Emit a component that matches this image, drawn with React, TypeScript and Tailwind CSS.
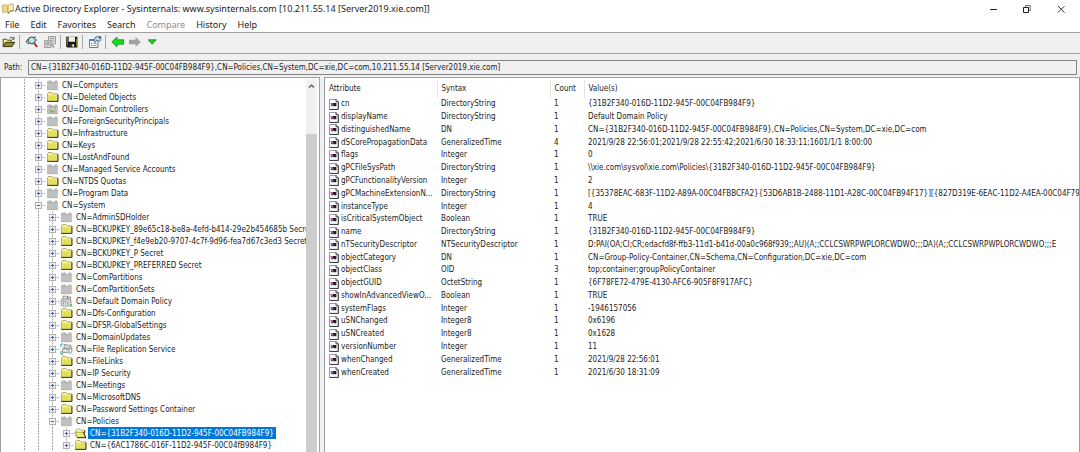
import React, { useState } from "react";

type IconKind = "folder" | "container" | "ou" | "policy" | "replication" | "open";

type Node = { name: string; level: 1 | 2 | 3; icon: IconKind; expanded?: boolean };

const NODES: Node[] = [
  { name: "CN=Computers", level: 1, icon: "container" },
  { name: "CN=Deleted Objects", level: 1, icon: "folder" },
  { name: "OU=Domain Controllers", level: 1, icon: "ou" },
  { name: "CN=ForeignSecurityPrincipals", level: 1, icon: "container" },
  { name: "CN=Infrastructure", level: 1, icon: "folder" },
  { name: "CN=Keys", level: 1, icon: "folder" },
  { name: "CN=LostAndFound", level: 1, icon: "folder" },
  { name: "CN=Managed Service Accounts", level: 1, icon: "container" },
  { name: "CN=NTDS Quotas", level: 1, icon: "folder" },
  { name: "CN=Program Data", level: 1, icon: "container" },
  { name: "CN=System", level: 1, icon: "container", expanded: true },
  { name: "CN=AdminSDHolder", level: 2, icon: "container" },
  { name: "CN=BCKUPKEY_89e65c18-be8a-4efd-b414-29e2b454685b Secret", level: 2, icon: "folder" },
  { name: "CN=BCKUPKEY_f4e9eb20-9707-4c7f-9d96-fea7d67c3ed3 Secret", level: 2, icon: "folder" },
  { name: "CN=BCKUPKEY_P Secret", level: 2, icon: "folder" },
  { name: "CN=BCKUPKEY_PREFERRED Secret", level: 2, icon: "folder" },
  { name: "CN=ComPartitions", level: 2, icon: "container" },
  { name: "CN=ComPartitionSets", level: 2, icon: "container" },
  { name: "CN=Default Domain Policy", level: 2, icon: "policy" },
  { name: "CN=Dfs-Configuration", level: 2, icon: "folder" },
  { name: "CN=DFSR-GlobalSettings", level: 2, icon: "folder" },
  { name: "CN=DomainUpdates", level: 2, icon: "container" },
  { name: "CN=File Replication Service", level: 2, icon: "replication" },
  { name: "CN=FileLinks", level: 2, icon: "folder" },
  { name: "CN=IP Security", level: 2, icon: "folder" },
  { name: "CN=Meetings", level: 2, icon: "container" },
  { name: "CN=MicrosoftDNS", level: 2, icon: "folder" },
  { name: "CN=Password Settings Container", level: 2, icon: "folder" },
  { name: "CN=Policies", level: 2, icon: "container", expanded: true },
  { name: "CN={31B2F340-016D-11D2-945F-00C04FB984F9}", level: 3, icon: "open" },
  { name: "CN={6AC1786C-016F-11D2-945F-00C04fB984F9}", level: 3, icon: "folder" },
];

const ATTRIBUTES: [string, string, string, string][] = [
  ["cn", "DirectoryString", "1", "{31B2F340-016D-11D2-945F-00C04FB984F9}"],
  ["displayName", "DirectoryString", "1", "Default Domain Policy"],
  ["distinguishedName", "DN", "1", "CN={31B2F340-016D-11D2-945F-00C04FB984F9},CN=Policies,CN=System,DC=xie,DC=com"],
  ["dSCorePropagationData", "GeneralizedTime", "4", "2021/9/28 22:56:01;2021/9/28 22:55:42;2021/6/30 18:33:11;1601/1/1 8:00:00"],
  ["flags", "Integer", "1", "0"],
  ["gPCFileSysPath", "DirectoryString", "1", "\\\\xie.com\\sysvol\\xie.com\\Policies\\{31B2F340-016D-11D2-945F-00C04FB984F9}"],
  ["gPCFunctionalityVersion", "Integer", "1", "2"],
  ["gPCMachineExtensionN...", "DirectoryString", "1", "[{35378EAC-683F-11D2-A89A-00C04FBBCFA2}{53D6AB1B-2488-11D1-A28C-00C04FB94F17}][{827D319E-6EAC-11D2-A4EA-00C04F79"],
  ["instanceType", "Integer", "1", "4"],
  ["isCriticalSystemObject", "Boolean", "1", "TRUE"],
  ["name", "DirectoryString", "1", "{31B2F340-016D-11D2-945F-00C04FB984F9}"],
  ["nTSecurityDescriptor", "NTSecurityDescriptor", "1", "D:PAI(OA;CI;CR;edacfd8f-ffb3-11d1-b41d-00a0c968f939;;AU)(A;;CCLCSWRPWPLORCWDWO;;;DA)(A;;CCLCSWRPWPLORCWDWO;;;E"],
  ["objectCategory", "DN", "1", "CN=Group-Policy-Container,CN=Schema,CN=Configuration,DC=xie,DC=com"],
  ["objectClass", "OID", "3", "top;container;groupPolicyContainer"],
  ["objectGUID", "OctetString", "1", "{6F78FE72-479E-4130-AFC6-905F8F917AFC}"],
  ["showInAdvancedViewO...", "Boolean", "1", "TRUE"],
  ["systemFlags", "Integer", "1", "-1946157056"],
  ["uSNChanged", "Integer8", "1", "0x6196"],
  ["uSNCreated", "Integer8", "1", "0x1628"],
  ["versionNumber", "Integer", "1", "11"],
  ["whenChanged", "GeneralizedTime", "1", "2021/9/28 22:56:01"],
  ["whenCreated", "GeneralizedTime", "1", "2021/6/30 18:31:09"],
];

const MENUS = ["File", "Edit", "Favorites", "Search", "Compare", "History", "Help"];

function NodeIcon({ kind }: { kind: IconKind }) {
  return (
    <svg className="h-3 w-[13px] shrink-0" viewBox="0 0 13 12" aria-hidden="true">
      {kind === "folder" && (
        <>
          <path d="M1.5 10V3L2.5 1.5H6L7 2.8H11.5V10Z" fill="#f4f0a8" stroke="#a9a03c" strokeWidth=".8" />
          <path d="M2.2 4.3H10.8V9.6H2.2Z" fill="#e3df55" />
          <path d="M1.2 10.4H12V3.4" fill="none" stroke="#34342a" strokeWidth="1" />
        </>
      )}
      {(kind === "container" || kind === "ou") && (
        <>
          <path d="M1 11V3L1.6 1.6H5.4L6.4 3H9L9.6 1.2H11.4V11Z" fill="#c0c0c0" />
          <path d="M1 3.4H11.4M5 1.6V3M8.6 1.4V3" stroke="#a2a2a2" strokeWidth=".6" />
          <path d="M1 10.7H11.7V3" fill="none" stroke="#a8a8a8" strokeWidth=".6" />
        </>
      )}
      {kind === "ou" && (
        <>
          <path d="M4.4 4H9V9H4.4Z" fill="#cfcfc6" stroke="#96968c" strokeWidth=".6" />
          <path d="M4.6 7.2H7.4V9.2H4.6Z" fill="#a89f4c" />
        </>
      )}
      {kind === "policy" && (
        <>
          <path d="M3 4V1.2H7.4V4M7.8 4.5V2H10.5V6" fill="#e8e8e8" stroke="#777" strokeWidth=".8" />
          <path d="M1 4.5L6 3.6L11 5V10.8L6 11.5L1 10.6Z" fill="#d6d6d6" stroke="#777" strokeWidth=".8" strokeDasharray="1.6 .7" />
          <path d="M3.4 5.5V9.8M5.6 5V8M7.8 6.6V10" stroke="#a0a0a0" strokeWidth=".9" />
          <path d="M10 9H12V11.4H10Z" fill="#6cbf6a" />
        </>
      )}
      {kind === "replication" && (
        <>
          <path d="M4 5.4V1.4H7L7.8 2.2H11V5.4Z" fill="#d0d0d0" stroke="#777" strokeWidth=".7" />
          <path d="M2.6 9.6V5.6H5.4L6.2 6.4H9.2V9.6Z" fill="#dcdcdc" stroke="#777" strokeWidth=".7" />
          <path d="M2.8 1H.9V4.2M1 7.8V11.2H3.4" fill="none" stroke="#2f9c9c" strokeWidth="1" />
          <path d="M11.8 4.6V8.4L10 11" fill="none" stroke="#2f9c9c" strokeWidth="1" />
        </>
      )}
      {kind === "open" && (
        <>
          <path d="M2 9.5V3L3 2H6L7 3.2H10.5V9.5Z" fill="#fbf8c8" stroke="#a9a03c" strokeWidth=".8" />
          <path d="M.8 5.2H9L11.4 10.4H3Z" fill="#ece87a" stroke="#8f872c" strokeWidth=".7" />
          <path d="M3 10.7H12L9.4 5.4M10.8 3.4V6" fill="none" stroke="#222" strokeWidth=".9" />
        </>
      )}
    </svg>
  );
}

function Guide() {
  return (
    <svg className="h-3 w-3.5 shrink-0" viewBox="0 0 14 12" aria-hidden="true">
      <path d="M6.5 0V12" stroke="#a6a6a6" strokeDasharray="2 1" />
    </svg>
  );
}

function Expander({ expanded, name }: { expanded?: boolean; name: string }) {
  return (
    <button type="button" aria-label={(expanded ? "Collapse " : "Expand ") + name} className="h-3 w-3.5 shrink-0">
      <svg className="block h-3 w-3.5" viewBox="0 0 14 12" aria-hidden="true">
        <path d="M6.5 0V12M7 6.5H14" stroke="#b0b0b0" strokeDasharray="1.5 .8" />
        <rect x="3.5" y="3.5" width="6" height="6" fill="#f4f4f4" stroke="#b2b2b2" />
        <path d={expanded ? "M4.8 6.5H8.2" : "M4.8 6.5H8.2M6.5 4.8V8.2"} stroke="#4c62a0" strokeWidth="1" />
      </svg>
    </button>
  );
}

function AttributeIcon() {
  return (
    <svg className="h-[11px] w-2.5 shrink-0" viewBox="0 0 10 11" aria-hidden="true">
      <path d="M.5 .5H7.2L9.3 2.6V10.5H.5Z" fill="#fff" stroke="#9a9a9a" />
      <path d="M7 .5V2.8H9.3V10.4H.6" fill="none" stroke="#2c2c2c" strokeWidth=".9" />
      <path d="M1.4 4H4V5.4H1.4Z" fill="#d9566a" />
      <path d="M2 5.4H4.6V7.2H2Z" fill="#3f3fc0" />
      <path d="M4 4H7.4V7.2H4.6V6H4Z" fill="#1e1e28" />
    </svg>
  );
}

function ToolButton({ label, disabled, children }: { label: string; disabled?: boolean; children: React.ReactNode }) {
  return (
    <button type="button" aria-label={label} disabled={disabled} className="h-3.5 w-3.5 shrink-0">
      <svg className="block h-3.5 w-3.5" viewBox="0 0 14 14" aria-hidden="true">
        {children}
      </svg>
    </button>
  );
}

function Separator() {
  return <div className="h-3.5 w-px shrink-0 bg-[#a8a8a8]" />;
}

export default function App() {
  const [selected, setSelected] = useState(29);
  return (
    <div className="flex h-screen flex-col overflow-hidden bg-[#f0f0f0] font-['DejaVu_Sans_Condensed','Liberation_Sans',sans-serif] text-[8px] leading-3 text-[#1c1c1c]">
      <header className="shrink-0 bg-white font-['Noto_Sans','Open_Sans',sans-serif] text-[9px]">
        <div className="flex h-[17px] items-center">
          <svg className="ml-px h-3 w-3.5 shrink-0" viewBox="0 0 14 12" aria-hidden="true">
            <path d="M1 2.5L5.5 1.5L7 3V10L5.8 8.8L1.8 9.5Z" fill="#f0d88a" stroke="#c09a45" strokeWidth=".7" />
            <path d="M7 3L8.8 1H12.2L12.6 7.5L9.5 8L7 10.4Z" fill="#f8e9b4" stroke="#b8913d" strokeWidth=".7" />
            <path d="M7 10.5L9.5 8.2L12.6 7.7" fill="none" stroke="#6e6148" strokeWidth=".9" />
          </svg>
          <h1 className="grow truncate">
            Active Directory Explorer - Sysinternals: www.sysinternals.com [10.211.55.14 [Server2019.xie.com]]
          </h1>
          <div className="flex gap-5 pr-3 text-[#222]">
            <button type="button" aria-label="Minimize" className="size-3.5">
              <svg className="block size-3.5" viewBox="0 0 14 14"><path d="M4 7.5H11" stroke="currentColor" /></svg>
            </button>
            <button type="button" aria-label="Restore" className="size-3.5">
              <svg className="block size-3.5" viewBox="0 0 14 14" fill="none" stroke="currentColor">
                <path d="M3.5 5.5H8.5V10.5H3.5Z" />
                <path d="M5.5 5V3.6H10.2V8.6H9" stroke="#666" />
              </svg>
            </button>
            <button type="button" aria-label="Close" className="size-3.5">
              <svg className="block size-3.5" viewBox="0 0 14 14"><path d="M4 4L10.5 10.5M10.5 4L4 10.5" stroke="currentColor" strokeWidth=".9" /></svg>
            </button>
          </div>
        </div>
        <nav className="flex h-[15px] items-center gap-[11px] pl-[5px]">
          {MENUS.map((m) => (
            <button key={m} type="button" disabled={m === "Compare"} className="disabled:text-[#8c8c8c]">
              {m}
            </button>
          ))}
        </nav>
      </header>

      <div role="toolbar" aria-label="Main" className="flex h-[22px] shrink-0 items-center gap-[3px] border-y border-[#a0a0a0] pb-0.5 pl-0.5">
        <ToolButton label="Open">
          <path d="M1.2 11.5V4.2H4.5L5.4 5.2H9.2V7" fill="#f4ef8a" stroke="#3a3810" strokeWidth=".9" />
          <path d="M1.2 11.6L3.6 7.3H12.8L10 11.6Z" fill="#8e8a1e" stroke="#2c2a08" strokeWidth=".9" />
          <path d="M7.6 3.2C9 1.8 10.6 2 11.4 3.4M12 1.8V4.2H9.8" fill="none" stroke="#222" strokeWidth=".8" />
        </ToolButton>
        <Separator />
        <div className="flex gap-1 pl-0.5">
          <ToolButton label="Search">
            <path d="M1 6.5L5 2.5L6 4M2.5 4.5L1.5 7.5L4 9" fill="none" stroke="#4b5a5a" strokeWidth="1" />
            <circle cx="6.8" cy="5.4" r="3.5" fill="#9fdfe0" stroke="#4a4a4a" strokeWidth="1" />
            <path d="M4.8 5.6L7.4 3M6 7.4L9 4.4" stroke="#f2ffff" strokeWidth=".9" />
            <path d="M9 8L12.2 12" stroke="#b8202c" strokeWidth="2" />
            <path d="M10 3V1.5M11 5H12" stroke="#222" strokeWidth=".9" />
          </ToolButton>
          <ToolButton label="Compare snapshots" disabled>
            <path d="M5.5 1.5H12.5V9H5.5Z" fill="#dadada" stroke="#a0a0a0" />
            <path d="M1.5 5.5H8V12.5H1.5Z" fill="#cfcfcf" stroke="#a0a0a0" />
            <path d="M3 7.5H6.5M3 9.5H6.5M7 3.5H11M8.5 6H11" stroke="#969696" />
            <path d="M8 9L11 12.5" stroke="#9b9b9b" strokeWidth="1.6" />
          </ToolButton>
        </div>
        <Separator />
        <div className="flex pl-px">
          <ToolButton label="Save">
            <path d="M1.2 1.8H12.4V12.6H2.4L1.2 11.4Z" fill="#101008" />
            <path d="M1.8 2.4H3V10.5H1.8ZM11 3.4H12V11.4H11Z" fill="#7c7a20" />
            <path d="M3.6 1.8H10V6.8H3.6Z" fill="#ececec" />
            <path d="M4.2 8.6H9.6V12H4.2Z" fill="#34342c" />
            <path d="M7.4 9.2H9V11.8H7.4Z" fill="#fff" />
          </ToolButton>
        </div>
        <Separator />
        <div className="flex pl-0.5">
          <ToolButton label="Properties">
            <path d="M1.5 4.5H10V12.5H1.5Z" fill="#fbfbfb" stroke="#6f7b8a" />
            <path d="M1.5 4.5H10V6H1.5Z" fill="#5b83b8" />
            <path d="M3 8.3H4.4M5.5 8.3H8.6M3 10.4H4.4M5.5 10.4H8.6" stroke="#7f8b98" />
            <path d="M6 5.2L7 2.6L9.4 1.4L12.8 2.2V5.2L10.6 6.4L9 5L7 7.4Z" fill="#b9d3ea" stroke="#3e5f86" strokeWidth=".8" />
            <path d="M11 1.4H12.8V3H11Z" fill="#1e3350" />
          </ToolButton>
        </div>
        <Separator />
        <div className="flex gap-[3px] pl-0.5">
          <ToolButton label="Back">
            <path d="M.8 7L6 2V4.8H12.6V9.2H6V12Z" fill="#13e01c" stroke="#18841c" strokeWidth=".8" />
          </ToolButton>
          <ToolButton label="Forward" disabled>
            <path d="M12.8 7L7.6 2V4.8H1V9.2H7.6V12Z" fill="#a2a2a2" />
          </ToolButton>
          <ToolButton label="History list">
            <path d="M3.2 4.8H11.2L7.2 9.2Z" fill="#12dc1c" stroke="#18841c" strokeWidth=".8" />
          </ToolButton>
        </div>
      </div>

      <div className="flex shrink-0 items-center pt-1.5 pr-[3px] pb-0.5 pl-1">
        <label htmlFor="path" className="w-6 shrink-0">Path:</label>
        <input
          id="path"
          readOnly
          className="h-[15px] min-w-0 grow border border-[#858585] bg-[#f0f0f0] px-0.5 outline-none"
          value="CN={31B2F340-016D-11D2-945F-00C04FB984F9},CN=Policies,CN=System,DC=xie,DC=com,10.211.55.14 [Server2019.xie.com]"
        />
      </div>

      <main className="flex min-h-0 grow gap-1">
        <section aria-label="Directory tree" className="flex w-80 shrink-0 border border-b-0 border-[#9a9fa6] bg-white pt-px pr-0.5">
          <ul className="min-w-0 grow overflow-hidden pl-[17px]">
            {NODES.map((n, i) => (
              <li key={n.name} className="flex h-3 whitespace-nowrap">
                {Array.from({ length: n.level }, (_, k) => <Guide key={k} />)}
                <Expander expanded={n.expanded} name={n.name} />
                <NodeIcon kind={n.icon} />
                <button
                  type="button"
                  onClick={() => setSelected(i)}
                  className={"ml-px flex shrink-0 items-start px-0.5 pt-px " + (i === selected ? "bg-[#0078d7] text-white" : "")}
                >
                  {n.name}
                </button>
              </li>
            ))}
          </ul>
          <div className="flex w-[11px] shrink-0 flex-col bg-[#f0f0f0]">
            <button type="button" aria-label="Scroll up" className="h-3.5 shrink-0">
              <svg className="block h-3.5 w-[11px]" viewBox="0 0 11 14" aria-hidden="true">
                <path d="M3 8.5L5.5 6L8 8.5" fill="none" stroke="#505050" strokeWidth="1.2" />
              </svg>
            </button>
            <div className="mt-[41px] grow bg-[#cdcdcd]" />
          </div>
        </section>

        <section aria-label="Attributes" className="min-w-0 grow overflow-hidden border border-b-0 border-[#9a9fa6] bg-white pt-0.5">
          <table className="h-[299px] w-full table-fixed border-collapse text-left whitespace-nowrap">
            <thead>
              <tr className="h-[18px]">
                <th className="w-28 border-r border-[#e4e4e4] pl-1 font-normal">Attribute</th>
                <th className="w-[113px] border-r border-[#e4e4e4] pl-1 font-normal">Syntax</th>
                <th className="w-[34px] border-r border-[#e4e4e4] pl-1 font-normal">Count</th>
                <th className="pl-1 font-normal">Value(s)</th>
              </tr>
            </thead>
            <tbody>
              {ATTRIBUTES.map(([name, syntax, count, value]) => (
                <tr key={name}>
                  <td className="p-0 pl-1">
                    <div className="flex items-center gap-0.5">
                      <AttributeIcon />
                      <span>{name}</span>
                    </div>
                  </td>
                  <td className="p-0 pl-1">{syntax}</td>
                  <td className="p-0 pl-1">{count}</td>
                  <td className="overflow-hidden p-0 pl-1">{value}</td>
                </tr>
              ))}
            </tbody>
          </table>
        </section>
      </main>
    </div>
  );
}
